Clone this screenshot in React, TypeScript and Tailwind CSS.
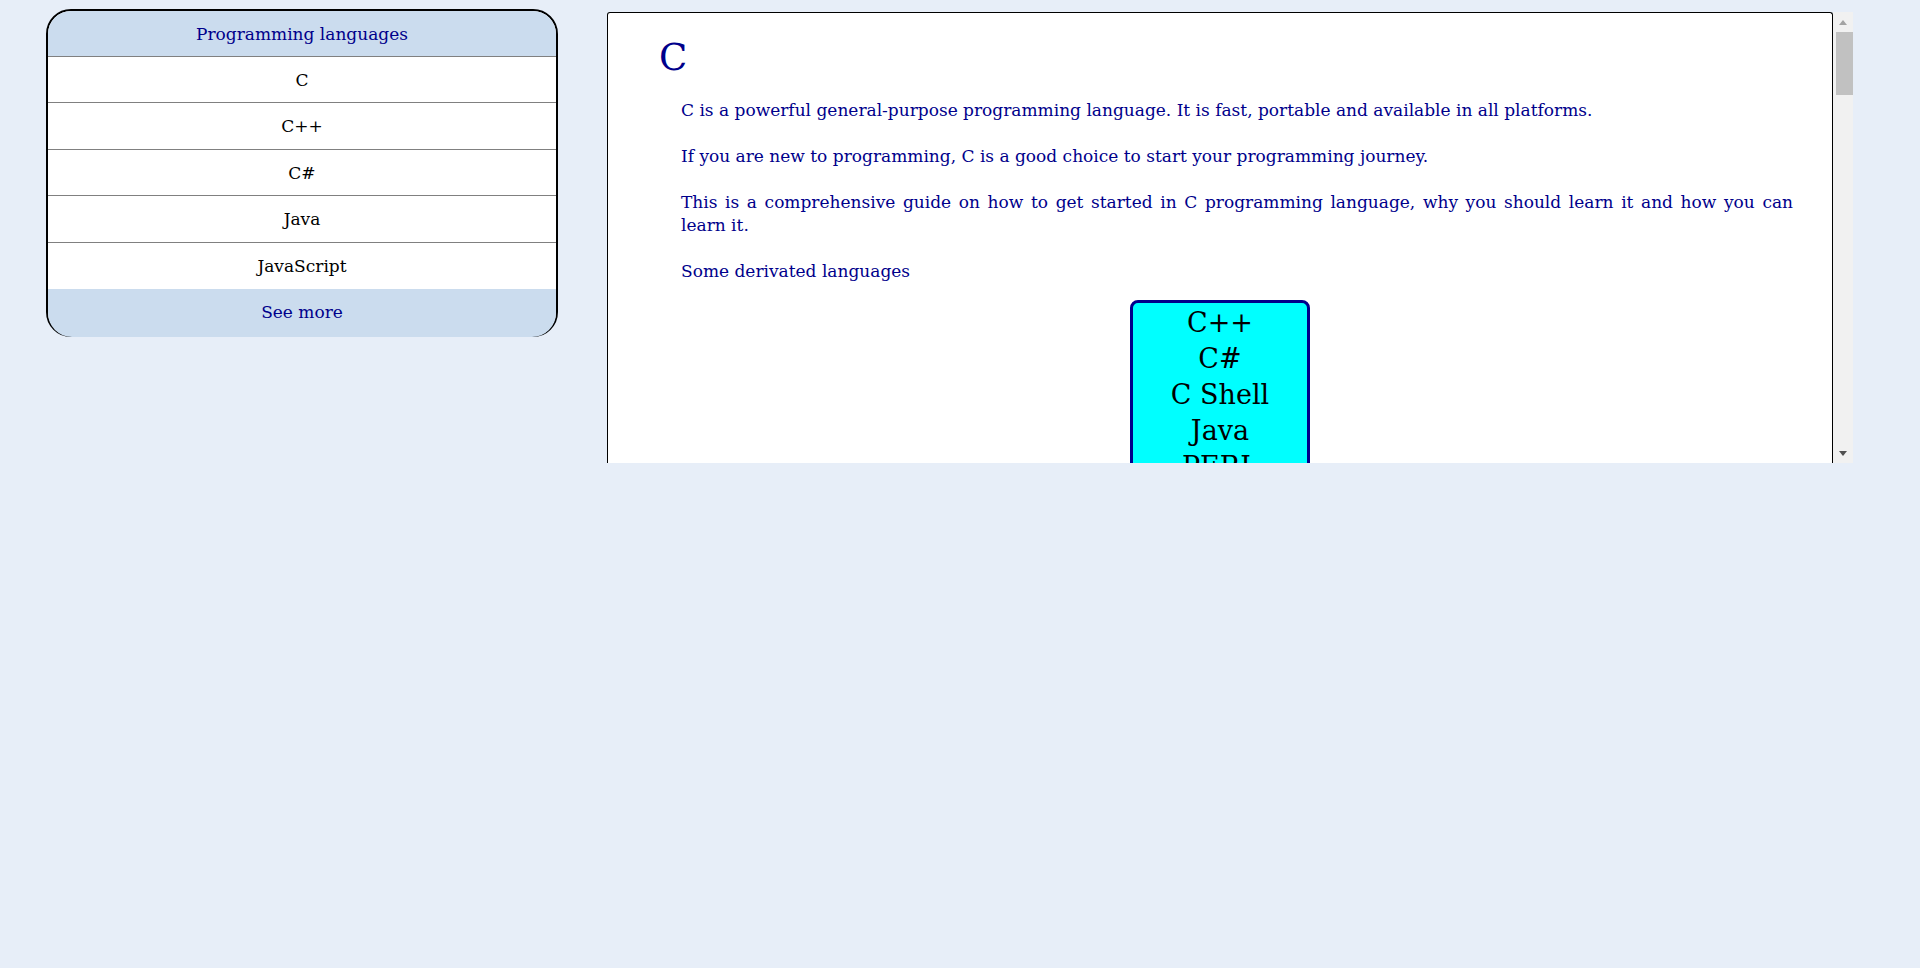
const languages = ["C", "C++", "C#", "Java", "JavaScript"];
const derived = ["C++", "C#", "C Shell", "Java", "PERL", "Python", "Objective-C"];

const Sidebar = () => (
  <div className="w-[512px] mt-[9px] border-2 border-black rounded-[25px] bg-white">
    <div className="h-[46px] pt-[2px] flex items-center justify-center bg-[#cbdcee] text-[#00008b] border-b border-[#808080] rounded-t-[23px]">
      Programming languages
    </div>
    {languages.map((lang, i) => (
      <div
        key={lang}
        className={
          i < languages.length - 1
            ? "h-[46.4px] pt-[2px] flex items-center justify-center text-black border-b border-[#808080]"
            : "h-[46.4px] pt-[2px] flex items-center justify-center text-black"
        }
      >
        {lang}
      </div>
    ))}
    <div className="relative -mb-[2px] h-[48px] flex items-center justify-center bg-[#cbdcee] text-[#00008b] rounded-b-[24px]">
      See more
    </div>
  </div>
);

const Scrollbar = () => (
  <div className="w-[20px] h-full bg-[#f1f1f1] flex flex-col items-center">
    <div className="h-[20px] w-full flex items-center justify-center">
      <svg width="8" height="5" viewBox="0 0 8 5">
        <path d="M0 5 L4 0 L8 5 Z" fill="#a3a3a3" />
      </svg>
    </div>
    <div className="w-[17px] h-[63px] bg-[#c1c1c1] ml-[3px]" />
    <div className="flex-1" />
    <div className="h-[20px] w-full flex items-center justify-center">
      <svg width="8" height="5" viewBox="0 0 8 5">
        <path d="M0 0 L8 0 L4 5 Z" fill="#505050" />
      </svg>
    </div>
  </div>
);

const Article = () => (
  <div className="mt-[12px] h-[451px] flex">
    <div className="w-[1226px] h-[451px] overflow-hidden bg-white border border-black border-b-0 rounded-t-[3px]">
      <div className="pl-[51px] pr-[39px] pt-[23px]">
        <h1 className="text-[37px] leading-[44px] text-[#00008b]">C</h1>
        <div className="pl-[22px] mt-[19px] text-[17px] leading-[23px] text-[#00008b]">
          <p>
            C is a powerful general-purpose programming language. It is fast, portable and available in all platforms.
          </p>
          <p className="mt-[23px]">
            If you are new to programming, C is a good choice to start your programming journey.
          </p>
          <p className="mt-[23px] text-justify">
            This is a comprehensive guide on how to get started in C programming language, why you should learn it and how you can learn it.
          </p>
          <p className="mt-[23px]">Some derivated languages</p>
          <div className="flex justify-center mt-[17px] pr-[34px]">
            <div className="w-[180px] bg-[#00ffff] border-[3px] border-[#00008b] rounded-[8px] text-black text-[27px] leading-[36px] text-center pt-[2px]">
              {derived.map((d) => (
                <div key={d}>{d}</div>
              ))}
            </div>
          </div>
        </div>
      </div>
    </div>
    <Scrollbar />
  </div>
);

export default function App() {
  return (
    <div
      className="min-h-screen w-full bg-[#e7eef8] flex items-start gap-[49px] pl-[46px] text-[17px]"
      style={{ fontFamily: '"DejaVu Serif", "Liberation Serif", serif' }}
    >
      <Sidebar />
      <Article />
    </div>
  );
}
